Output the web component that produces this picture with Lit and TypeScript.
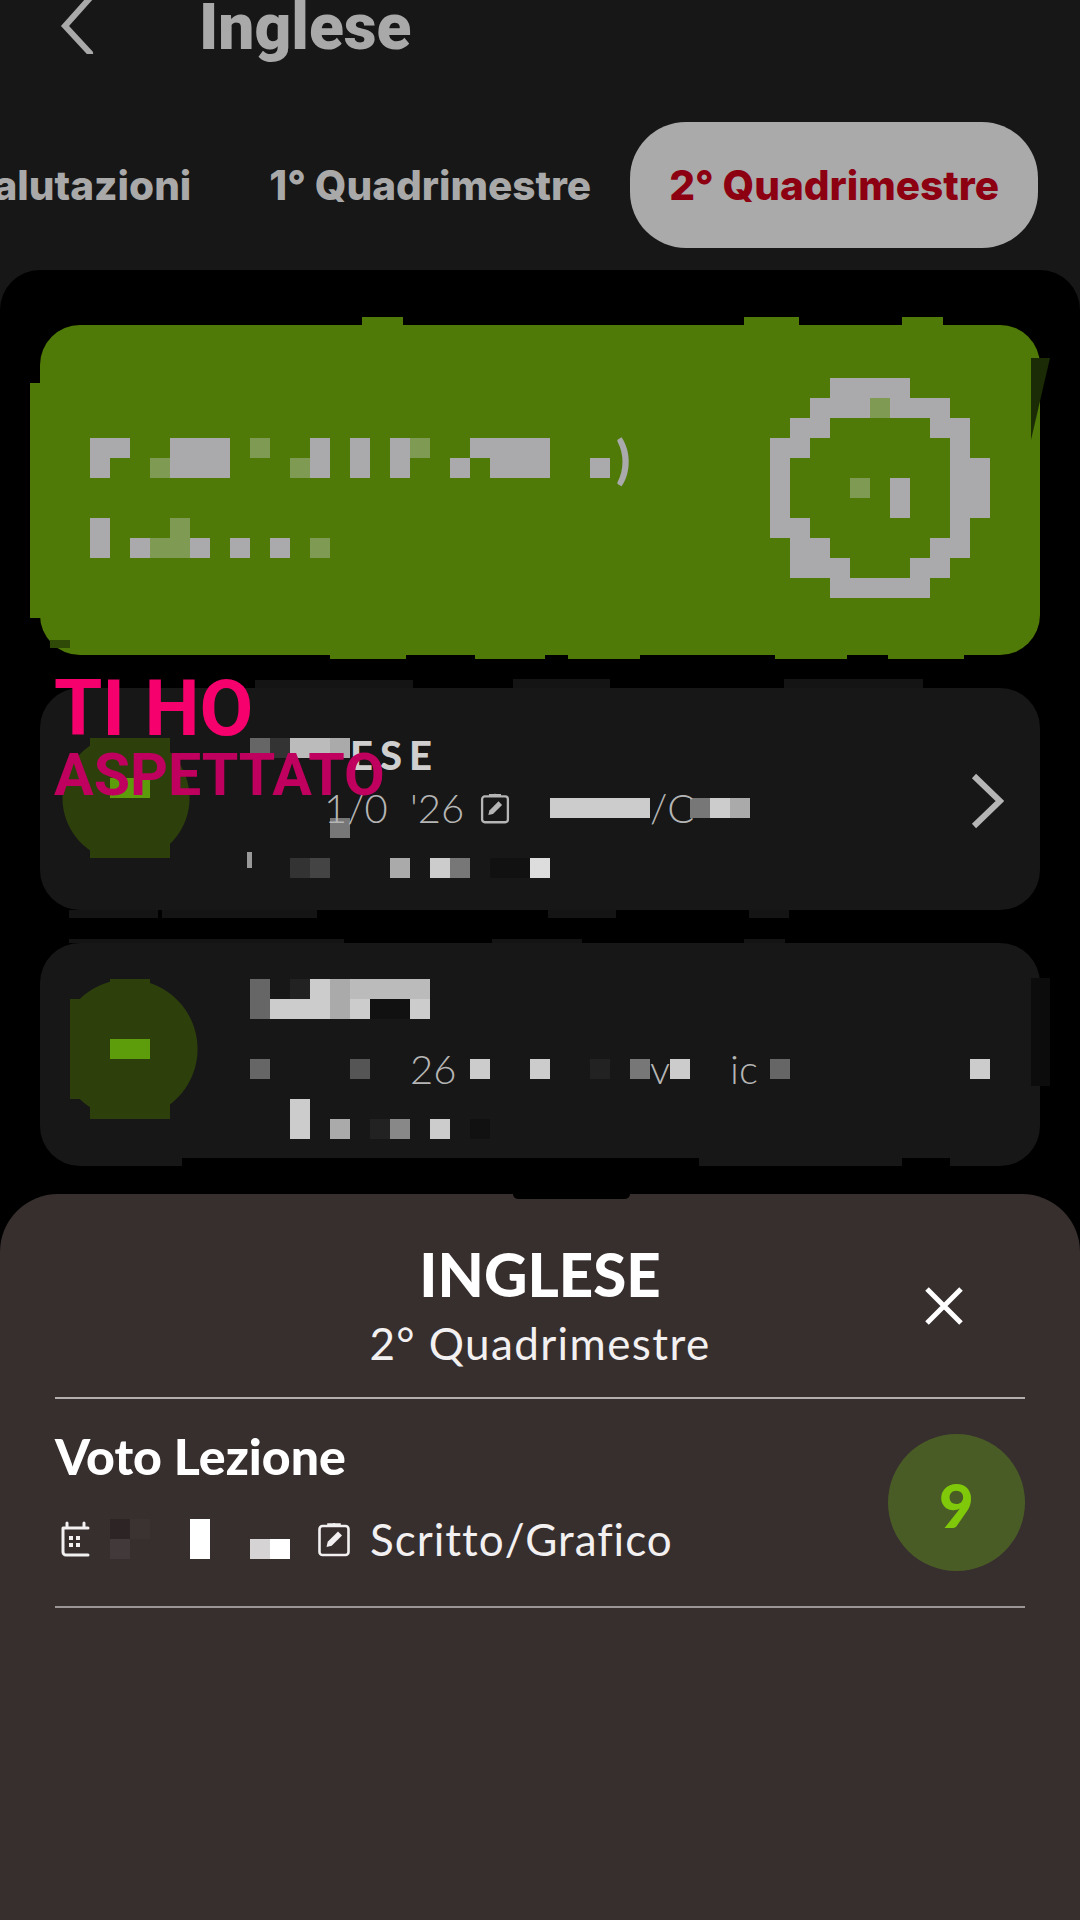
import { css, html, LitElement, nothing, svg, TemplateResult } from 'lit';
import { customElement } from 'lit/decorators.js';

type Palette = Record<string, string>;

interface Frag {
  col: number;
  row: number;
  span: number;
  text: string;
}

const GREEN_PIX: Palette = { '#': '#aaaaad', '+': '#7f9a52' };
const ORB: Palette = { g: '#2d3f0a', G: '#5d9c0a' };
const SHEET_PIX: Palette = { a: '#2d2525', b: '#3b3232', c: '#423a3a', s: '#d5d3d3', w: '#ffffff' };

const shade = (ch: string, palette: Palette) => palette[ch] ?? `#${ch}${ch}${ch}`;

// censored areas of the screenshot: each char is one 20px square
function mosaic(
  rows: string[],
  palette: Palette = {},
  frags: Frag[] = [],
  cls = '',
  cols = Math.max(...rows.map((r) => r.length)),
  extra: TemplateResult | typeof nothing = nothing,
) {
  return html`
    <div class="mosaic ${cls}" style="grid-template-columns: repeat(${cols}, 20px)">
      ${rows.map((row, y) =>
        [...row].map((ch, x) =>
          ch === '.'
            ? nothing
            : html`<i style="grid-area: ${y + 1} / ${x + 1}; background: ${shade(ch, palette)}"></i>`,
        ),
      )}
      ${frags.map(
        (f) =>
          html`<span class="frag" style="grid-area: ${f.row + 1} / ${f.col + 1} / auto / span ${f.span}">${f.text}</span>`,
      )}
      ${extra}
    </div>
  `;
}

function bumps(items: [number, number, number, number][], color: string) {
  return items.map(
    ([x, y, w, h]) =>
      html`<b class="bump" style="left: ${x}px; top: ${y}px; width: ${w}px; height: ${h}px; background: ${color}"></b>`,
  );
}

const clipboardIcon = svg`
  <rect x="2" y="5" width="29" height="29" rx="3" fill="none" stroke="currentColor" stroke-width="2.6" />
  <path d="M11 5V3.5h4.5a2 2 0 0 1 2 0H22V5" fill="none" stroke="currentColor" stroke-width="2.6" />
  <path d="M9 26l1.2-5.2L20.5 10.5l4 4L14.2 24.8z" fill="currentColor" />
`;

const calendarIcon = svg`
  <path d="M6 7h23M8 2v4M25 2v4M4 7v24a3 3 0 0 0 3 3h22M4 7h2" fill="none" stroke="currentColor" stroke-width="3" stroke-linecap="round" />
  <g fill="currentColor">
    <rect x="10" y="15" width="4" height="4" /><rect x="17" y="15" width="4" height="4" />
    <rect x="10" y="22" width="4" height="4" /><rect x="17" y="22" width="4" height="4" />
  </g>
`;

@customElement('app-root')
export class AppRoot extends LitElement {
  static override styles = css`
    :host {
      display: block;
      position: relative;
      width: 1080px;
      height: 1920px;
      overflow: hidden;
      background: #171717;
      font-family: 'Roboto', sans-serif;
    }

    .top {
      height: 122px;
      display: flex;
      align-items: flex-start;
      padding-left: 60px;
      box-sizing: border-box;
    }

    .back {
      flex: none;
      width: 34px;
      height: 54px;
      color: #a9a9a9;
    }

    .title {
      margin-left: 105px;
      font-size: 64px;
      line-height: 56px;
      font-weight: 900;
      color: #a9a9a9;
    }

    .tabs {
      height: 126px;
      display: flex;
      justify-content: flex-end;
      padding-right: 42px;
      overflow: hidden;
      white-space: nowrap;
    }

    .tab {
      flex: 0 0 auto;
      display: flex;
      align-items: center;
      padding: 0 39px;
      font-family: 'Inter', sans-serif;
      font-size: 40.5px;
      font-weight: 800;
      color: #a9a9a9;
    }

    .tab.on {
      background: #aaaaaa;
      color: #8d0012;
      border-radius: 56px;
    }

    .panel {
      margin-top: 22px;
      padding-top: 55px;
      height: 1650px;
      box-sizing: border-box;
      background: #000;
      border-radius: 40px 40px 0 0;
    }

    .cards {
      display: flex;
      flex-direction: column;
      gap: 33px;
      padding: 0 40px;
    }

    .card {
      position: relative;
      display: flex;
      box-sizing: border-box;
      border-radius: 40px;
      background: #171717;
    }

    .card.hero {
      height: 330px;
      padding: 53px 50px 0;
      justify-content: space-between;
      background: #4f7a07;
    }

    .card.g1 {
      height: 222px;
      padding: 50px 0 0 10px;
      gap: 60px;
    }

    .card.g2 {
      height: 223px;
      padding: 36px 0 0 30px;
      gap: 50px;
    }

    .bump {
      position: absolute;
    }

    .wedge {
      position: absolute;
      left: 991px;
      top: 33px;
      width: 19px;
      height: 82px;
      background: #1b2b05;
      clip-path: polygon(0 0, 100% 0, 0 100%);
    }

    .mosaic {
      flex: none;
      display: grid;
      grid-auto-rows: 20px;
      align-content: start;
    }

    .mosaic i {
      display: block;
    }

    .hero-text {
      margin-top: 60px;
    }

    .orb1 {
      width: 140px;
      height: 120px;
      background: radial-gradient(circle at 76px 60px, #2d3f0a 63px, transparent 64px);
    }

    .orb2 {
      width: 130px;
      height: 140px;
      background: radial-gradient(circle at 58px 70px, #2d3f0a 69px, transparent 70px);
    }

    .frag {
      font-family: 'Lato', sans-serif;
      font-size: 40px;
      font-weight: 300;
      line-height: 20px;
      color: #b5b5b5;
      white-space: nowrap;
    }

    .hero-text .frag {
      margin: 10px 0 0 6px;
      font-size: 52px;
      color: #aaaaad;
      font-weight: 900;
    }

    .head-frag .frag:first-of-type {
      font-size: 40px;
      letter-spacing: 7px;
      font-weight: 900;
      color: #cfcfcf;
      line-height: 34px;
    }

    .head-frag .frag:nth-of-type(2) {
      margin-left: -6px;
    }

    .clip {
      grid-area: 4 / 12 / auto / span 2;
      justify-self: end;
      width: 30px;
      height: 32px;
      margin-top: -6px;
      color: #b5b5b5;
    }

    .chev {
      flex: none;
      margin-top: 35px;
      width: 34px;
      height: 56px;
      color: #b5b5b5;
    }

    .strip {
      position: absolute;
      left: 991px;
      top: 35px;
      width: 19px;
      height: 108px;
      background: #0c0c0c;
    }

    .sheet {
      position: relative;
      margin-top: 28px;
      height: 726px;
      box-sizing: border-box;
      padding: 44px 55px 0;
      background: #372e2e;
      border-radius: 58px 58px 0 0;
      font-family: 'Lato', sans-serif;
      color: #fff;
    }

    .notch {
      position: absolute;
      left: 513px;
      top: 0;
      width: 117px;
      height: 5px;
      background: #000;
      border-radius: 0 0 30px 30px;
    }

    .sheet-head {
      display: grid;
      grid-template-columns: 1fr auto 1fr;
      padding-bottom: 28px;
      border-bottom: 2px solid #b5aeae;
    }

    .sheet-titles {
      grid-column: 2;
      text-align: center;
    }

    .sheet-title {
      font-size: 60px;
      line-height: 72px;
      font-weight: 900;
    }

    .sheet-sub {
      margin-top: 7px;
      font-size: 44px;
      line-height: 52px;
      letter-spacing: 1.4px;
      font-weight: 400;
      color: #f2f0f0;
    }

    .close {
      grid-column: 3;
      justify-self: end;
      align-self: start;
      width: 40px;
      height: 40px;
      margin: 48px 61px 0 0;
    }

    .row {
      display: flex;
      justify-content: space-between;
      padding: 35px 0;
      border-bottom: 2px solid #9d9696;
    }

    .row-title {
      margin-top: -4px;
      font-size: 50px;
      line-height: 52px;
      font-weight: 900;
    }

    .meta {
      margin-top: 37px;
      display: flex;
      align-items: center;
      color: #f2f0f0;
    }

    .cal {
      flex: none;
      width: 32px;
      height: 37px;
      margin: 0 19px 0 4px;
    }

    .clip-big {
      flex: none;
      width: 34px;
      height: 36px;
      margin: 0 19px 0 27px;
    }

    .meta-text {
      font-size: 44px;
      line-height: 40px;
      letter-spacing: 1px;
    }

    .vote {
      flex: 0 0 auto;
      box-sizing: border-box;
      width: 137px;
      height: 137px;
      padding-top: 4px;
      border-radius: 50%;
      display: flex;
      align-items: center;
      justify-content: center;
      background: #4a5c26;
      color: #7fc80a;
      font-size: 60px;
      font-weight: 900;
    }

    .sticker {
      position: absolute;
      left: 54px;
      top: 672px;
      display: flex;
      flex-direction: column;
      font-weight: 700;
      white-space: nowrap;
    }

    .sticker-a {
      font-size: 78px;
      line-height: 74px;
      color: #f5006c;
    }

    .sticker-b {
      font-size: 59px;
      line-height: 58px;
      color: #c0005e;
    }
  `;

  private heroCard() {
    const text = [
      '##..###.+..#.#.#+..####',
      '#..+###...+#.#.#..#.###..#',
      '..',
      '..',
      '#...+',
      '#.#++#.#.#.+',
    ];
    const ring = [
      '...####',
      '..###+###',
      '.##.....##',
      '##.......#',
      '#........##',
      '#...+.#..##',
      '#.....#..##',
      '##.......#',
      '.##.....##',
      '.###...##',
      '...#####',
    ];
    return html`
      <div class="card hero">
        ${bumps(
          [
            [322, -8, 41, 8],
            [704, -8, 55, 8],
            [862, -8, 41, 8],
            [290, 330, 76, 4],
            [435, 330, 70, 4],
            [528, 330, 72, 4],
            [735, 330, 72, 4],
            [848, 330, 76, 4],
            [-10, 58, 14, 235],
          ],
          '#4f7a07',
        )}
        ${bumps([[10, 315, 20, 8]], '#2f4a06')}
        <div class="wedge"></div>
        ${mosaic(text, GREEN_PIX, [{ col: 26, row: 0, span: 2, text: ')' }], 'hero-text')}
        ${mosaic(ring, GREEN_PIX)}
      </div>
    `;
  }

  private gradeOne() {
    const orb = ['..gggg', '..gggg', '..gGGg', '..', '..', '..gggg'];
    const body = [
      '63bba',
      '',
      '',
      '...............ccccc..7ca',
      '....7',
      '',
      '..34...a.c7.11d',
    ];
    const frags: Frag[] = [
      { col: 5, row: 0, span: 5, text: 'ESE' },
      { col: 4, row: 3, span: 3, text: '1/0' },
      { col: 8, row: 3, span: 3, text: "'26" },
      { col: 20, row: 3, span: 2, text: '/C' },
    ];
    const clip = html`<svg class="clip" viewBox="0 0 33 36">${clipboardIcon}</svg>`;
    return html`
      <div class="card g1">
        ${bumps(
          [
            [215, -8, 158, 8],
            [473, -9, 97, 9],
            [744, -9, 139, 9],
            [29, 222, 89, 8],
            [122, 222, 155, 8],
            [508, 222, 68, 8],
            [709, 222, 40, 8],
          ],
          '#141414',
        )}
        ${bumps([[207, 164, 5, 16]], '#999')}
        ${mosaic(orb, ORB, [], 'orb1')}
        ${mosaic(body, {}, frags, 'head-frag', 33, clip)}
        <svg class="chev" viewBox="0 0 34 56">
          <path d="M4 3l26 25L4 53" fill="none" stroke="currentColor" stroke-width="6" />
        </svg>
      </div>
    `;
  }

  private gradeTwo() {
    const orb = ['..gg', 'ggggg', 'ggggg', 'ggGGg', 'ggggg', 'ggggg', '.gggg'];
    const body = [
      '6.2cabbbb',
      '6cccac11c',
      '',
      '',
      '6....5.....c..c..2.7.c....6.........c',
      '',
      '..c',
      '..c.a.28.c.1',
    ];
    return html`
      <div class="card g2">
        ${bumps(
          [
            [29, -4, 275, 4],
            [452, -4, 90, 4],
            [704, -4, 41, 4],
          ],
          '#141414',
        )}
        ${bumps(
          [
            [142, 215, 517, 8],
            [862, 215, 48, 8],
          ],
          '#000',
        )}
        <div class="strip"></div>
        ${mosaic(orb, ORB, [], 'orb2')}
        ${mosaic(body, {}, [
          { col: 8, row: 4, span: 3, text: '26' },
          { col: 20, row: 4, span: 1, text: 'v' },
          { col: 24, row: 4, span: 2, text: 'ic' },
        ])}
      </div>
    `;
  }

  private sheet() {
    const hidden = ['ab..w....', 'c...w..sw'];
    return html`
      <div class="sheet">
        <div class="notch"></div>
        <div class="sheet-head">
          <div class="sheet-titles">
            <div class="sheet-title">INGLESE</div>
            <div class="sheet-sub">2° Quadrimestre</div>
          </div>
          <svg class="close" viewBox="0 0 40 40">
            <path d="M3 3l34 34M37 3L3 37" fill="none" stroke="#fff" stroke-width="5" />
          </svg>
        </div>
        <div class="row">
          <div>
            <div class="row-title">Voto Lezione</div>
            <div class="meta">
              <svg class="cal" viewBox="0 0 32 37">${calendarIcon}</svg>
              ${mosaic(hidden, SHEET_PIX)}
              <svg class="clip-big" viewBox="0 0 33 36">${clipboardIcon}</svg>
              <span class="meta-text">Scritto/Grafico</span>
            </div>
          </div>
          <div class="vote">9</div>
        </div>
      </div>
    `;
  }

  override render() {
    return html`
      <div class="top">
        <svg class="back" viewBox="0 0 34 54">
          <path d="M30 -2L5 26l25 27" fill="none" stroke="currentColor" stroke-width="6" stroke-linecap="round" />
        </svg>
        <div class="title">Inglese</div>
      </div>
      <div class="tabs">
        <div class="tab">Valutazioni</div>
        <div class="tab">1° Quadrimestre</div>
        <div class="tab on">2° Quadrimestre</div>
      </div>
      <div class="panel">
        <div class="cards">
          ${this.heroCard()} ${this.gradeOne()} ${this.gradeTwo()}
        </div>
        ${this.sheet()}
      </div>
      <div class="sticker">
        <span class="sticker-a">TI HO</span>
        <span class="sticker-b">ASPETTATO</span>
      </div>
    `;
  }
}

declare global {
  interface HTMLElementTagNameMap {
    'app-root': AppRoot;
  }
}
